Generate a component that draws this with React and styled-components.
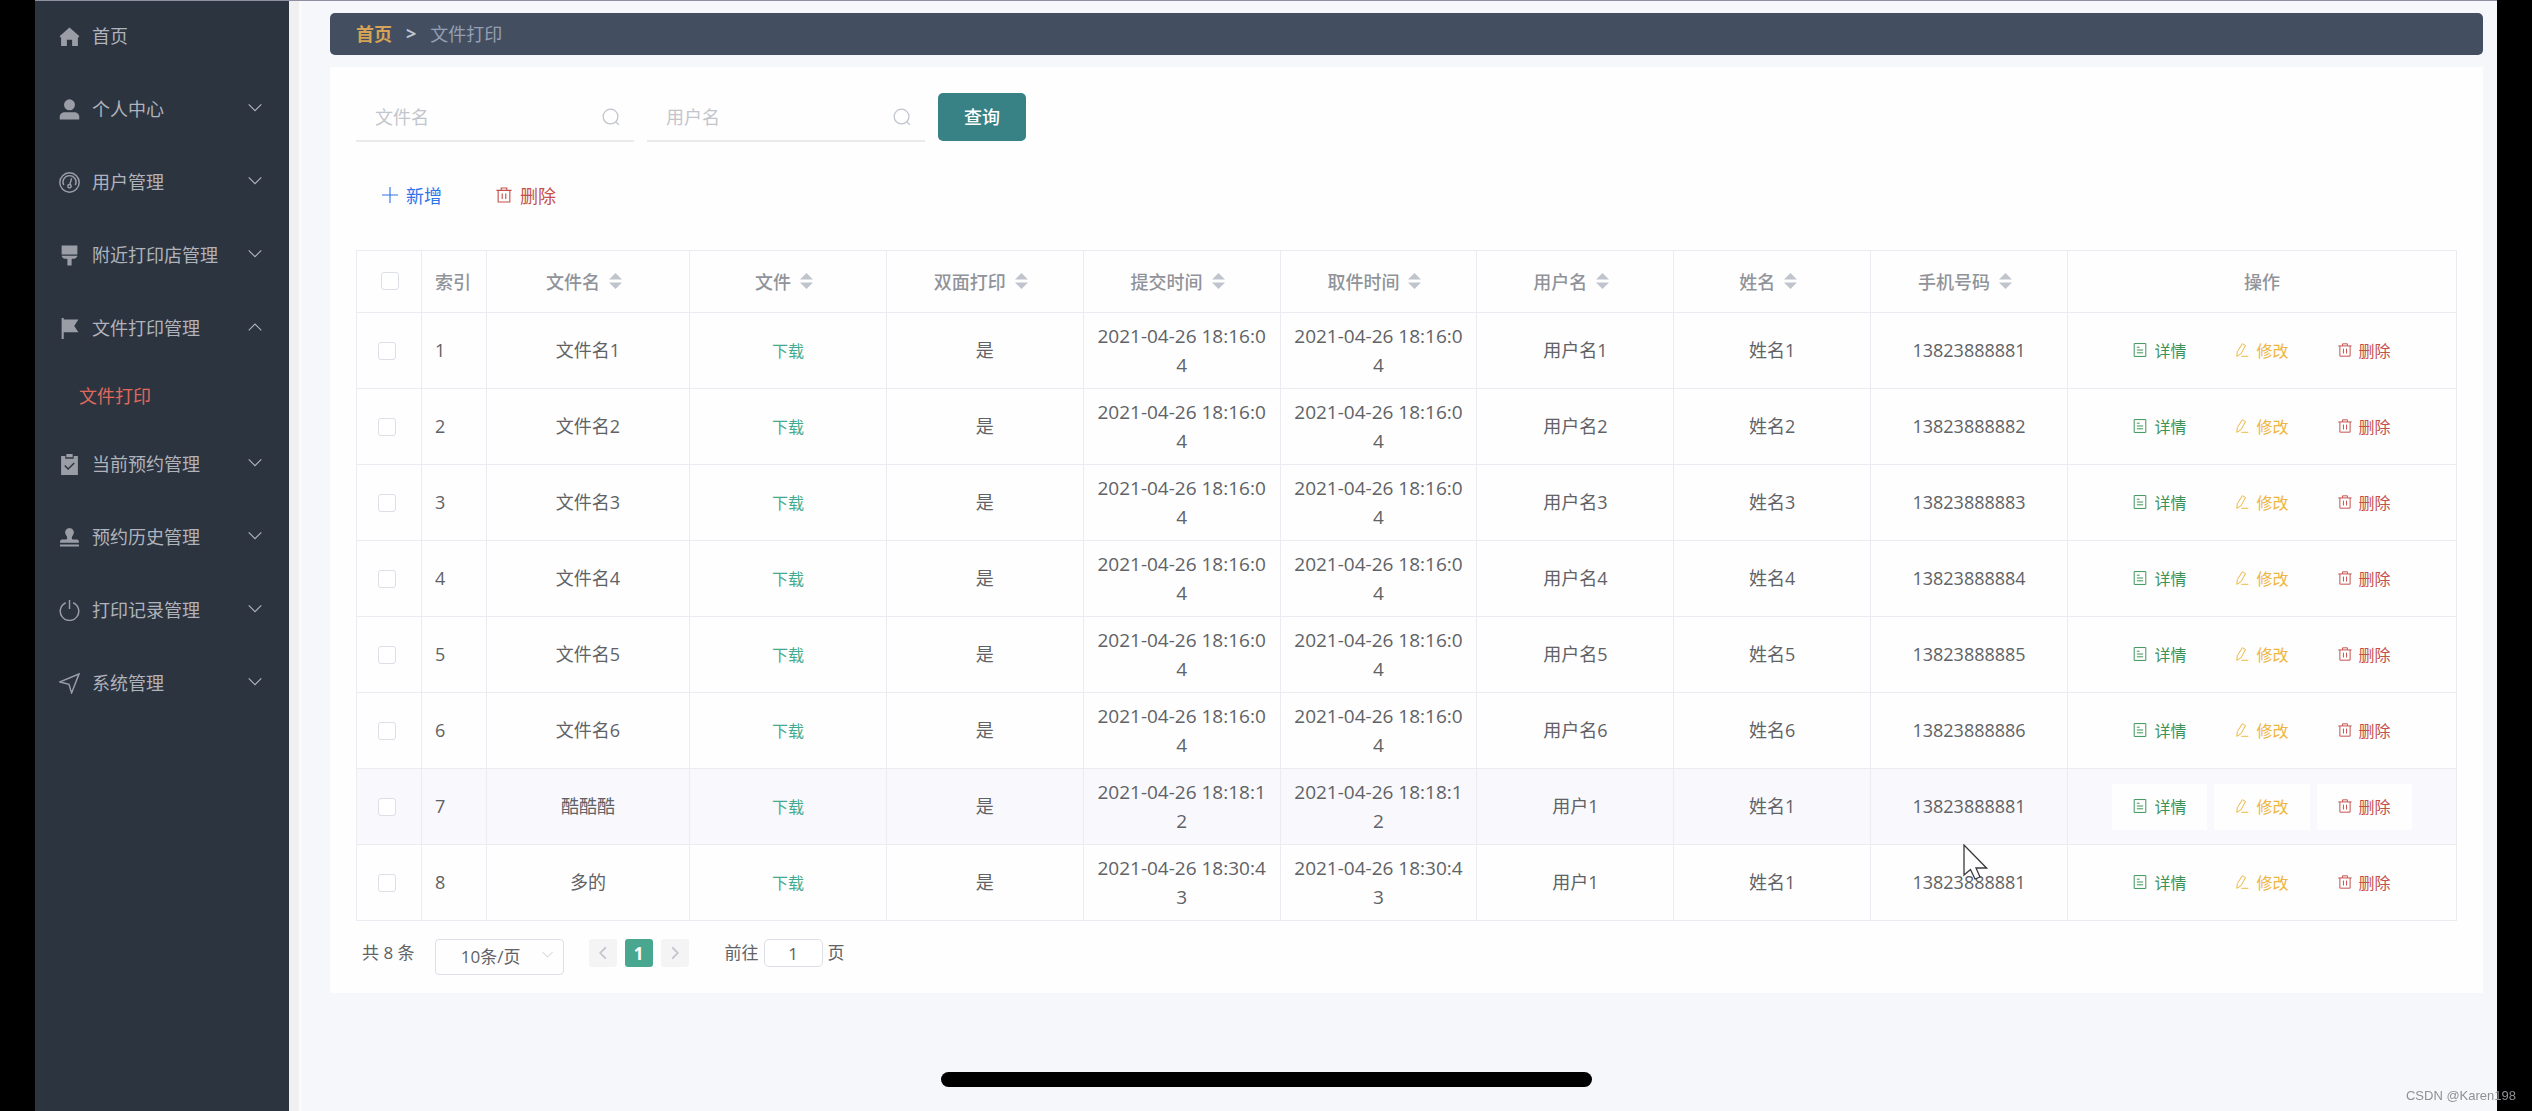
import React, { useState } from 'react';
import styled, { createGlobalStyle, css } from 'styled-components';

const GlobalStyle = createGlobalStyle`
  *, *::before, *::after {
    box-sizing: border-box;
  }

  body {
    margin: 0;
    background: #000;
    font-family: 'Open Sans', 'Noto Sans CJK SC', sans-serif;
    font-size: 18px;
    color: #606266;
  }

  button, input, select {
    font-family: inherit;
  }
`;

const Screen = styled.div`
  display: flex;
  min-height: 100vh;
  margin: 0 35px;
  border-top: 1px solid #8e90a2;
  background: #f6f7fb;
`;

const Sidebar = styled.nav`
  flex: 0 0 254px;
  background: #2c3440;
`;

const Menu = styled.ul`
  margin: 0;
  padding: 0;
  list-style: none;
`;

const MenuButton = styled.button`
  display: flex;
  align-items: center;
  gap: 12px;
  width: 100%;
  height: 73px;
  padding: 0 27px 2px 24px;
  border: 0;
  background: none;
  color: #b0b3bc;
  font-size: 18px;
  text-align: left;
  cursor: pointer;

  span {
    flex: 1;
    padding-bottom: 4px;
  }
`;

const SubLink = styled.a`
  display: flex;
  align-items: center;
  height: 63px;
  padding: 0 0 6px 44px;
  color: #e0695c;
  text-decoration: none;
`;

const ScrollTrack = styled.div`
  flex: 0 0 13px;
  border-right: 3px solid #fafafb;
  background: #f0f0f0;
`;

const Main = styled.main`
  flex: 1;
  min-width: 0;
  padding: 12px 14px 0 28px;
`;

const Breadcrumb = styled.nav`
  display: flex;
  align-items: center;
  gap: 14px;
  height: 42px;
  margin-bottom: 12px;
  padding: 0 26px 2px;
  border-radius: 5px;
  background: #434f61;
  color: #949fb3;

  a {
    color: #d6a256;
    font-weight: 700;
    text-decoration: none;
  }

  b {
    color: #c0c4cc;
  }
`;

const Card = styled.section`
  padding: 26px 26px 18px;
  background: #fefefe;
`;

const SearchForm = styled.form`
  display: flex;
  gap: 13px;
`;

const Field = styled.label`
  display: flex;
  align-items: center;
  width: 278px;
  height: 49px;
  padding: 0 14px 0 19px;
  border-bottom: 2px solid #eaeaec;
  color: #c0c4cc;

  input {
    flex: 1;
    min-width: 0;
    padding: 0;
    border: 0;
    outline: 0;
    background: none;
    color: #606266;
    font-size: 18px;
  }

  input::placeholder {
    color: #c3c5cc;
  }
`;

const SearchButton = styled.button`
  width: 88px;
  height: 48px;
  padding: 0 0 2px;
  border: 0;
  border-radius: 5px;
  background: #388185;
  color: #fff;
  font-size: 18px;
  font-weight: 500;
  cursor: pointer;
`;

const tones = {
  blue: '#2f74ea',
  red: '#c4504b',
  green: '#3b9258',
  yellow: '#eeb53e',
};

const TextButton = styled.button`
  display: inline-flex;
  align-items: center;
  justify-content: center;
  gap: 7px;
  height: 46px;
  padding: 0 21px 2px;
  border: 0;
  background: #fefefe;
  color: ${props => tones[props.$tone]};
  font-size: 16px;
  cursor: pointer;

  ${props => props.$large && css`
    gap: 8px;
    padding: 0 26px 2px;
    font-size: 18px;
  `}
`;

const Toolbar = styled.div`
  display: flex;
  gap: 2px;
  margin: 31px 0;
`;

const Table = styled.table`
  width: 100%;
  table-layout: fixed;
  border-collapse: separate;
  border-spacing: 0;
  border-top: 1px solid #ebecf1;
  border-left: 1px solid #ebecf1;
`;

const Col = styled.col`
  width: ${props => (props.$width ? `${props.$width}px` : 'auto')};
`;

const cell = css`
  padding: 0 13px;
  border-right: 1px solid #ebecf1;
  border-bottom: 1px solid #ebecf1;
  text-align: ${props => props.$align || 'center'};
`;

const HeadCell = styled.th`
  ${cell}
  height: 62px;
  padding-bottom: 2px;
  color: #909399;
  font-weight: 500;
`;

const Cell = styled.td`
  ${cell}
  height: 76px;
  line-height: 29px;
  word-break: break-all;
`;

const TimeCell = styled(Cell)`
  font-size: 19px;
`;

const Row = styled.tr`
  background: ${props => (props.$hovered ? '#f9f9fd' : '#fefefe')};
`;

const SortButton = styled.button`
  display: inline-flex;
  align-items: center;
  gap: 9px;
  padding: 0 8px 0 0;
  border: 0;
  background: none;
  color: inherit;
  font-size: 18px;
  font-weight: inherit;
  cursor: pointer;
`;

const CheckBox = styled.input`
  display: block;
  appearance: none;
  width: 18px;
  height: 18px;
  margin: 0 0 0 ${props => (props.$head ? 11 : 8)}px;
  border: 1px solid #dcdfe6;
  border-radius: 3px;
  background: #fff;

  &:checked {
    background: #4aa78f;
  }
`;

const DownloadLink = styled.a`
  color: #44aa8f;
  font-size: 16px;
  text-decoration: none;
`;

const Actions = styled.div`
  display: flex;
  justify-content: center;
  gap: 7px;
`;

const Pagination = styled.div`
  display: flex;
  align-items: flex-start;
  margin-top: 18px;
  padding-left: 6px;
  font-size: 17px;
  line-height: 28px;
`;

const PageSize = styled.label`
  display: flex;
  align-items: center;
  width: 129px;
  height: 36px;
  margin: 0 25px 0 20px;
  padding: 0 10px 2px 4px;
  border: 1px solid #dcdfe6;
  border-radius: 4px;
  color: #c0c4cc;

  select {
    flex: 1;
    appearance: none;
    padding: 0;
    border: 0;
    outline: 0;
    background: none;
    color: #606266;
    font-size: 17px;
    text-align: center;
    text-align-last: center;
  }
`;

const Pager = styled.div`
  display: flex;
  gap: 8px;
`;

const PageButton = styled.button`
  display: flex;
  align-items: center;
  justify-content: center;
  width: 28px;
  height: 28px;
  padding: 0;
  border: 0;
  border-radius: 3px;
  background: ${props => (props.$active ? '#4aa78f' : '#f4f4f5')};
  color: ${props => (props.$active ? '#fff' : '#c0c4cc')};
  font-size: 17px;
  font-weight: 700;
`;

const Jump = styled.label`
  display: flex;
  align-items: center;
  gap: 5px;
  margin-left: 36px;

  input {
    width: 59px;
    height: 28px;
    padding: 0;
    border: 1px solid #dcdfe6;
    border-radius: 5px;
    outline: 0;
    color: #606266;
    font-size: 17px;
    text-align: center;
  }
`;

const HomeBar = styled.div`
  position: fixed;
  bottom: 24px;
  left: 50%;
  width: 651px;
  height: 15px;
  margin-left: -325px;
  border-radius: 8px;
  background: #000;
`;

const Watermark = styled.div`
  position: fixed;
  right: 16px;
  bottom: 5px;
  color: #8f9094;
  font-family: 'Liberation Sans', sans-serif;
  font-size: 13px;
  line-height: 20px;
`;

const Phone = styled.div`
  position: relative;
`;

const Pointer = styled.svg`
  position: absolute;
  top: -24px;
  left: 79px;
  z-index: 1;
`;

const Svg = ({ size = 20, children, ...rest }) => (
  <svg
    width={size}
    height={size}
    viewBox="0 0 20 20"
    fill="none"
    stroke="currentColor"
    strokeWidth="1.4"
    aria-hidden="true"
    {...rest}
  >
    {children}
  </svg>
);

const menuIcons = {
  home: <path d="M10 1.500.800 9.600V10.800H2V19h5.500v-6h5v6H18v-8.200h1.200V9.600Z" fill="#9b9da6" stroke="none" />,
  user: (
    <g fill="#9b9da6" stroke="none">
      <circle cx="10" cy="5.500" r="5.200" />
      <path d="M.700 19.500v-2.500C.700 14 3 12.500 5.500 12.500h9c2.500 0 4.800 1.500 4.800 4.500v2.500Z" />
    </g>
  ),
  gauge: (
    <g stroke="#9b9da6">
      <circle cx="10" cy="10" r="9.200" />
      <path d="M4.500 12.500a6.200 6.200 0 1 1 11 0M12 6 10.300 12" />
      <circle cx="10" cy="13.500" r="1.600" />
    </g>
  ),
  brush: (
    <path
      d="M2.500.500h15v8.500h-15ZM2.500 10.300h15c-.300 1.700-1.500 2.700-3.200 2.700h-1.500c-.600 0-.800.300-.800.900V19.500H8V13.900c0-.600-.200-.900-.800-.900H5.700c-1.700 0-2.900-1-3.200-2.700Z"
      fill="#9b9da6"
      stroke="none"
    />
  ),
  flag: <path d="M2.500 0h2v1.500H18.500L14.500 7.500l4 6h-14V20h-2Z" fill="#9b9da6" stroke="none" />,
  clipboard: (
    <g>
      <path d="M2 2h4v2.500h8V2h4v18H2ZM7 0h6v3.200H7Z" fill="#9b9da6" stroke="none" />
      <path d="m5.500 11 3.200 3.200L14.500 8.500" stroke="#2c3440" />
    </g>
  ),
  stamp: (
    <path
      d="M10 1a4.300 4.300 0 0 1 3 7.300c-1.200 1.200-1 3.700.500 3.700H17c1.500 0 2 1 2 3H1c0-2 .500-3 2-3h3.500c1.500 0 1.700-2.500.500-3.700A4.300 4.300 0 0 1 10 1ZM1 16.700h18V18.500H1Z"
      fill="#9b9da6"
      stroke="none"
    />
  ),
  power: <path d="M10 0V8.500M6.500 2.600a8.800 8.800 0 1 0 7 0" stroke="#9b9da6" />,
  send: <path d="M19 1 1 8.500l8.500 2.300L12 19Z" stroke="#9b9da6" />,
};

const Chevron = ({ up, size = 14 }) => (
  <Svg size={size} strokeWidth="1.6">
    <path d={up ? 'M1 12 10 3l9 9' : 'M1 2l9 9 9-9'} />
  </Svg>
);

const SearchIcon = () => (
  <Svg size={18}>
    <circle cx="9.500" cy="9.500" r="8.200" />
    <path d="m15.300 15.300 3.500 3.500" />
  </Svg>
);

const PlusIcon = () => (
  <Svg size={16}>
    <path d="M10 0v20M0 10h20" />
  </Svg>
);

const TrashIcon = ({ size = 14 }) => (
  <Svg size={size}>
    <path d="M.500 4.200h19M6.500 4V1.200h7V4M2.700 4.200v14.600h14.600V4.200M7.800 8v7M12.200 8v7" />
  </Svg>
);

const DocIcon = () => (
  <Svg size={14}>
    <path d="M1.700.800h16.600v18.400H1.700ZM5.500 6h4M5.500 10h9M5.500 14h9" />
  </Svg>
);

const PenIcon = () => (
  <Svg size={14}>
    <path d="m10.500 1 4.500 2.600-6.500 11.900-6 3.500.800-6.500ZM9 19h10" />
  </Svg>
);

const SortIcon = () => (
  <svg width="13" height="16" viewBox="0 0 13 16" fill="#c0c4cc" aria-hidden="true">
    <path d="M6.500 0 13 6.500H0ZM6.500 16 0 9.500h13Z" />
  </svg>
);

const menu = [
  { label: '首页', icon: 'home', leaf: true },
  { label: '个人中心', icon: 'user' },
  { label: '用户管理', icon: 'gauge' },
  { label: '附近打印店管理', icon: 'brush' },
  { label: '文件打印管理', icon: 'flag', children: ['文件打印'] },
  { label: '当前预约管理', icon: 'clipboard' },
  { label: '预约历史管理', icon: 'stamp' },
  { label: '打印记录管理', icon: 'power' },
  { label: '系统管理', icon: 'send' },
];

const columns = ['文件名', '文件', '双面打印', '提交时间', '取件时间', '用户名', '姓名', '手机号码'];

const rows = [
  ...[1, 2, 3, 4, 5, 6].map(n => ({
    id: n,
    file: `文件名${n}`,
    time: '2021-04-26 18:16:04',
    user: `用户名${n}`,
    name: `姓名${n}`,
    phone: `1382388888${n}`,
  })),
  { id: 7, file: '酷酷酷', time: '2021-04-26 18:18:12', user: '用户1', name: '姓名1', phone: '13823888881', hovered: true },
  { id: 8, file: '多的', time: '2021-04-26 18:30:43', user: '用户1', name: '姓名1', phone: '13823888881', pointer: true },
];

const SideMenu = () => (
  <Sidebar>
    <Menu>
      {menu.map(item => (
        <li key={item.label}>
          <MenuButton type="button">
            <Svg size={21}>{menuIcons[item.icon]}</Svg>
            <span>{item.label}</span>
            {!item.leaf && <Chevron up={Boolean(item.children)} />}
          </MenuButton>
          {item.children?.map(child => (
            <SubLink key={child} href="#print">{child}</SubLink>
          ))}
        </li>
      ))}
    </Menu>
  </Sidebar>
);

const FileTable = () => (
  <Table>
    <colgroup>
      <Col $width={65} />
      <Col $width={65} />
      <Col $width={203} />
      {columns.slice(1).map(name => <Col key={name} />)}
      <Col $width={389} />
    </colgroup>
    <thead>
      <tr>
        <HeadCell><CheckBox $head type="checkbox" aria-label="全选" /></HeadCell>
        <HeadCell $align="left">索引</HeadCell>
        {columns.map(name => (
          <HeadCell key={name}>
            <SortButton type="button">{name}<SortIcon /></SortButton>
          </HeadCell>
        ))}
        <HeadCell>操作</HeadCell>
      </tr>
    </thead>
    <tbody>
      {rows.map(row => (
        <Row key={row.id} $hovered={row.hovered}>
          <Cell><CheckBox type="checkbox" aria-label={row.file} /></Cell>
          <Cell $align="left">{row.id}</Cell>
          <Cell>{row.file}</Cell>
          <Cell><DownloadLink href="#download">下载</DownloadLink></Cell>
          <Cell>是</Cell>
          <TimeCell>{row.time}</TimeCell>
          <TimeCell>{row.time}</TimeCell>
          <Cell>{row.user}</Cell>
          <Cell>{row.name}</Cell>
          <Cell>
            <Phone>
              {row.phone}
              {row.pointer && (
                <Pointer width="25" height="36" viewBox="0 0 25 36" aria-hidden="true">
                  <path d="M1 1v30l6.500-5.500L12 35l5-2-4-9h10.500Z" fill="#fff" stroke="#3a3a40" strokeWidth="1.300" />
                </Pointer>
              )}
            </Phone>
          </Cell>
          <Cell>
            <Actions>
              <TextButton type="button" $tone="green"><DocIcon />详情</TextButton>
              <TextButton type="button" $tone="yellow"><PenIcon />修改</TextButton>
              <TextButton type="button" $tone="red"><TrashIcon />删除</TextButton>
            </Actions>
          </Cell>
        </Row>
      ))}
    </tbody>
  </Table>
);

const App = () => {
  const [page, setPage] = useState('1');

  return (
    <>
      <GlobalStyle />
      <Screen>
        <SideMenu />
        <ScrollTrack />
        <Main>
          <Breadcrumb>
            <a href="#home">首页</a>
            <b>&gt;</b>
            <span>文件打印</span>
          </Breadcrumb>
          <Card>
            <SearchForm onSubmit={e => e.preventDefault()}>
              <Field>
                <input placeholder="文件名" aria-label="文件名" />
                <SearchIcon />
              </Field>
              <Field>
                <input placeholder="用户名" aria-label="用户名" />
                <SearchIcon />
              </Field>
              <SearchButton>查询</SearchButton>
            </SearchForm>
            <Toolbar>
              <TextButton type="button" $tone="blue" $large><PlusIcon />新增</TextButton>
              <TextButton type="button" $tone="red" $large><TrashIcon size={16} />删除</TextButton>
            </Toolbar>
            <FileTable />
            <Pagination>
              <span>共 8 条</span>
              <PageSize>
                <select aria-label="每页条数">
                  <option>10条/页</option>
                </select>
                <Chevron size={11} />
              </PageSize>
              <Pager>
                <PageButton type="button" aria-label="上一页">
                  <Svg size={14} strokeWidth="2.500"><path d="m14 2-8 8 8 8" /></Svg>
                </PageButton>
                <PageButton type="button" $active>1</PageButton>
                <PageButton type="button" aria-label="下一页">
                  <Svg size={14} strokeWidth="2.500"><path d="m6 2 8 8-8 8" /></Svg>
                </PageButton>
              </Pager>
              <Jump>
                前往
                <input value={page} onChange={e => setPage(e.target.value)} />
                页
              </Jump>
            </Pagination>
          </Card>
        </Main>
      </Screen>
      <HomeBar />
      <Watermark>CSDN @Karen198</Watermark>
    </>
  );
};

export default App;
